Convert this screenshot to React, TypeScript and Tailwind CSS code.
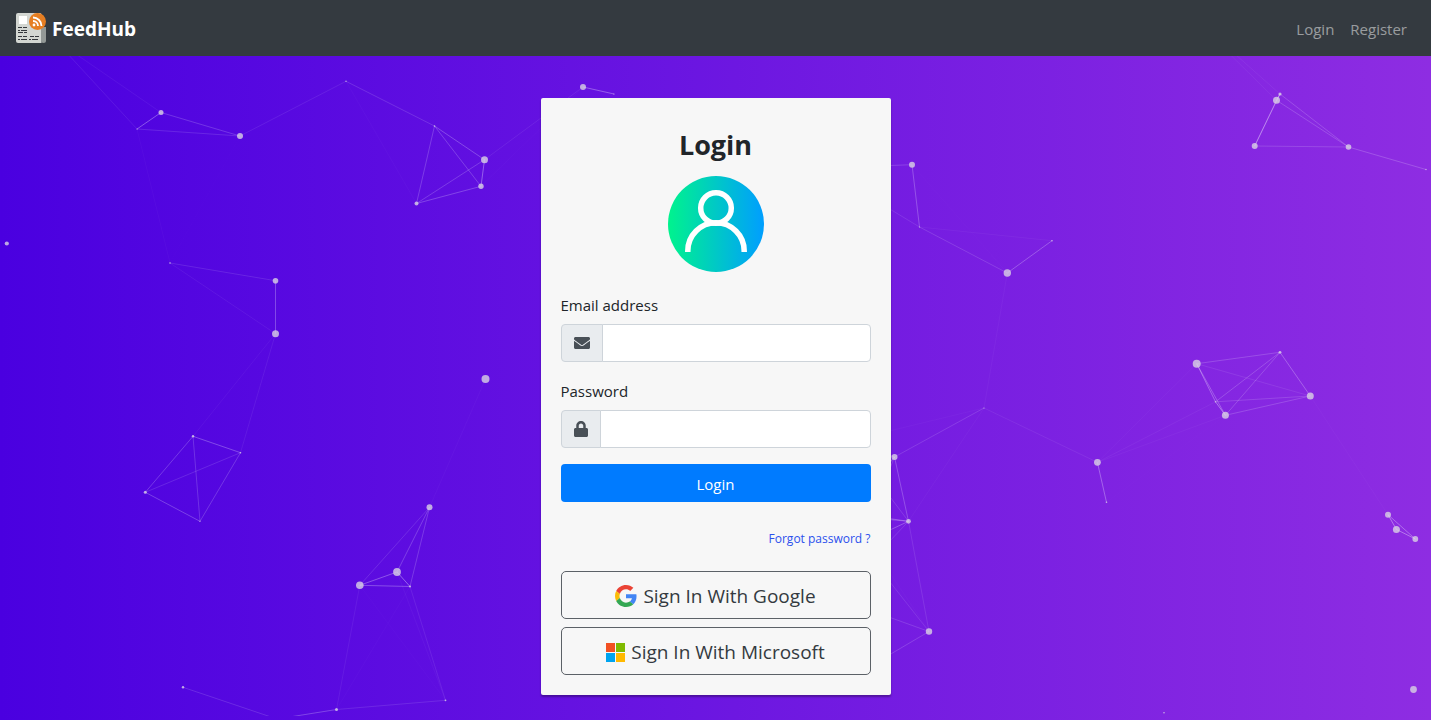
import React from "react";
import { FaEnvelope, FaLock } from "react-icons/fa";

type Particle = [x: number, y: number, radius: number];

const LINK_DISTANCE = 150;

const particles: Particle[] = [
  [54, 39, 1], [161, 112.5, 2.5], [240, 136, 3], [137, 129, 0.6], [346, 81.3, 0.7],
  [434.5, 126, 0.8], [484.5, 159.7, 3.5], [481, 186.3, 2.7], [416.5, 203.5, 2],
  [6.8, 243.5, 2.1], [170, 263, 0.8], [275.5, 280.7, 2.8], [275.5, 333.7, 3.5],
  [485.5, 379, 4], [583, 87, 3], [614, 94, 0.6], [193, 436.3, 1.2], [240.5, 452.7, 0.8],
  [145.3, 492.3, 1.5], [200, 521.3, 0.6], [429.5, 507.3, 3], [397, 572, 3.9],
  [359.8, 585.3, 3.8], [410, 586.5, 1], [183, 687.3, 1.2], [277, 719, 1],
  [336.5, 709.5, 1.5], [445.5, 700.3, 0.9], [822, 168, 2], [912, 164.7, 3],
  [919.5, 227, 0.6], [1052, 240.7, 0.8], [1007.3, 273, 3.7], [1183, 8, 1],
  [1276.5, 100.3, 3.5], [1280, 94, 1.6], [1254.7, 146, 3], [1348.5, 147, 2.8],
  [1426, 169.5, 0.7], [1280, 352.3, 1.4], [1196.7, 363.7, 4], [1310.3, 396, 3.5],
  [1225.4, 415.3, 3.5], [1215.5, 401.8, 0.7], [984, 408, 0.6], [894.5, 457, 3],
  [908.5, 521.3, 2.4], [929, 631.5, 3.2], [1097.4, 462.3, 3.4], [1106.5, 502.3, 0.8],
  [1388, 514.7, 3], [1396.4, 529.4, 3.5], [1415.3, 539, 2.9], [1413.5, 689.5, 3.4],
  [1164, 712.7, 0.8], [848, 441, 2], [838, 515, 2], [860, 544, 2], [850, 513, 2],
  [836, 598, 2], [850, 678, 2],
];

const links = particles.flatMap(([x1, y1], i) =>
  particles.slice(i + 1).flatMap(([x2, y2]) => {
    const distance = Math.hypot(x2 - x1, y2 - y1);
    return distance < LINK_DISTANCE
      ? [{ x1, y1, x2, y2, opacity: 0.4 * (1 - distance / LINK_DISTANCE) }]
      : [];
  }),
);

function ParticleField() {
  return (
    <svg
      aria-hidden="true"
      className="pointer-events-none absolute inset-0 h-full w-full"
      viewBox="0 0 1431 720"
      preserveAspectRatio="xMidYMid slice"
    >
      <clipPath id="field"><rect width="1431" height="716" /></clipPath>
      <g clipPath="url(#field)">
        {links.map((l, i) => (
          <line key={i} x1={l.x1} y1={l.y1} x2={l.x2} y2={l.y2} stroke="#fff" strokeOpacity={l.opacity} />
        ))}
        {particles.map(([x, y, r], i) => (
          <circle key={i} cx={x} cy={y} r={r} fill="#d9d2e4" fillOpacity="0.8" />
        ))}
      </g>
    </svg>
  );
}

function FeedLogo() {
  return (
    <svg aria-hidden="true" className="size-[30px]" viewBox="0 0 30 30">
      <path d="M2 0h22a1.500 1.500 0 0 1 1.500 1.500V30H2a2 2 0 0 1-2-2V2a2 2 0 0 1 2-2z" fill="#d3d6d2" />
      <path d="M25 14h5v13.500a2.500 2.500 0 0 1-5 0z" fill="#939896" />
      <path d="M3 3h8v8H3z" fill="#fff" />
      <path
        d="M2 14.500h4m1 0h4M2 17.500h2m1 0h6M2 19.500h5m1 0h3M2 23.500h4m1 0h4m3 0h4m1 0h4M2 26.500h2m1 0h6m2 0h2m1 0h6"
        stroke="#34373c"
      />
      <circle cx="21.500" cy="8.500" r="8.500" fill="#e67e22" />
      <circle cx="18" cy="12" r="1.400" fill="#fff" />
      <path d="M17 8a5 5 0 0 1 5 5M17 4.500a8.500 8.500 0 0 1 8.500 8.500" fill="none" stroke="#fff" strokeWidth="1.800" />
    </svg>
  );
}

function Avatar() {
  return (
    <svg aria-hidden="true" className="mx-auto mt-3.5 size-24" viewBox="0 0 96 96">
      <linearGradient id="avatar">
        <stop offset="0" stopColor="#00f38d" />
        <stop offset="1" stopColor="#009eff" />
      </linearGradient>
      <circle cx="48" cy="48" r="48" fill="url(#avatar)" />
      <g fill="none" stroke="#fff" strokeWidth="5.500">
        <circle cx="48" cy="32" r="15.300" />
        <path d="M19.800 76v-1a28.200 28.200 0 0 1 56.400 0v1" />
      </g>
    </svg>
  );
}

function GoogleIcon() {
  return (
    <svg aria-hidden="true" className="size-[22px]" viewBox="0 0 48 48">
      <path fill="#EA4335" d="M24 9.500c3.540 0 6.710 1.220 9.210 3.600l6.850-6.850C35.900 2.380 30.470 0 24 0 14.620 0 6.510 5.380 2.560 13.220l7.980 6.190C12.430 13.720 17.740 9.500 24 9.500z" />
      <path fill="#4285F4" d="M46.980 24.550c0-1.570-.15-3.090-.38-4.550H24v9.020h12.940c-.58 2.960-2.260 5.480-4.780 7.180l7.730 6c4.510-4.180 7.090-10.360 7.090-17.650z" />
      <path fill="#FBBC05" d="M10.530 28.590c-.48-1.450-.76-2.990-.76-4.590s.27-3.140.76-4.590l-7.980-6.190C.92 16.460 0 20.120 0 24c0 3.880.92 7.540 2.560 10.780l7.970-6.190z" />
      <path fill="#34A853" d="M24 48c6.480 0 11.930-2.130 15.890-5.810l-7.730-6c-2.150 1.450-4.920 2.300-8.160 2.300-6.260 0-11.570-4.220-13.470-9.910l-7.980 6.190C6.510 42.620 14.620 48 24 48z" />
    </svg>
  );
}

function MicrosoftIcon() {
  return (
    <svg aria-hidden="true" className="size-[19px]" viewBox="0 0 19 19">
      <path fill="#f25022" d="M0 0h9v9H0z" />
      <path fill="#7fba00" d="M10 0h9v9h-9z" />
      <path fill="#00a4ef" d="M0 10h9v9H0z" />
      <path fill="#ffb900" d="M10 10h9v9h-9z" />
    </svg>
  );
}

interface FieldProps {
  id: string;
  label: string;
  type: string;
  icon: React.ReactNode;
}

function Field({ id, label, type, icon }: FieldProps) {
  return (
    <div className="mb-4">
      <label htmlFor={id} className="mb-1.5 block leading-[26px]">{label}</label>
      <div className="flex h-[38px]">
        <span className="flex items-center rounded-l border border-[#ced4da] bg-[#e9ecef] px-3 text-base text-[#495057]">
          {icon}
        </span>
        <input
          id={id}
          type={type}
          className="-ml-px min-w-0 flex-1 rounded-r border border-[#ced4da] bg-white px-3 outline-none focus:border-[#80bdff]"
        />
      </div>
    </div>
  );
}

function ProviderButton({ icon, children }: { icon: React.ReactNode; children: React.ReactNode }) {
  return (
    <button
      type="button"
      className="flex h-12 w-full items-center justify-center gap-1.5 rounded-[5px] border border-[#5c6167] pt-0.5 text-[19px] text-[#343a40]"
    >
      {icon}
      <span>{children}</span>
    </button>
  );
}

export default function App() {
  return (
    <div className="relative flex min-h-screen flex-col bg-[linear-gradient(to_right,#4a00e0,#8e2de2)] font-['Segoe_UI','Open_Sans',sans-serif] text-[15px] text-[#212529]">
      <ParticleField />
      <nav className="relative flex h-14 items-center justify-between bg-[#343a40] px-4">
        <a href="#" className="flex items-center gap-1.5 text-[19px] font-bold text-white">
          <FeedLogo />
          <span className="pt-0.5">FeedHub</span>
        </a>
        <div className="flex gap-4 px-2 pt-0.5 text-white/50">
          <a href="#login">Login</a>
          <a href="#register">Register</a>
        </div>
      </nav>
      <main className="relative flex flex-1 items-start justify-center px-4 pt-[42px] pb-6">
        <form
          className="w-full max-w-[350px] rounded-xs bg-[#f7f7f7] px-5 pt-[30px] pb-5 shadow-[0_2px_2px_rgba(0,0,0,0.3)]"
          onSubmit={(e) => e.preventDefault()}
        >
          <h1 className="text-center text-[27px] leading-[34px] font-bold">Login</h1>
          <Avatar />
          <div className="mt-5">
            <Field id="email" label="Email address" type="email" icon={<FaEnvelope />} />
            <Field id="password" label="Password" type="password" icon={<FaLock className="w-3.5" />} />
          </div>
          <button type="submit" className="h-[38px] w-full rounded bg-[#007bff] pt-0.5 text-white">
            Login
          </button>
          <div className="mt-[25px] mb-5 text-right text-xs leading-6">
            <a href="#forgot" className="text-[#2b50ed]">Forgot password ?</a>
          </div>
          <div className="flex flex-col gap-2">
            <ProviderButton icon={<GoogleIcon />}>Sign In With Google</ProviderButton>
            <ProviderButton icon={<MicrosoftIcon />}>Sign In With Microsoft</ProviderButton>
          </div>
        </form>
      </main>
    </div>
  );
}
